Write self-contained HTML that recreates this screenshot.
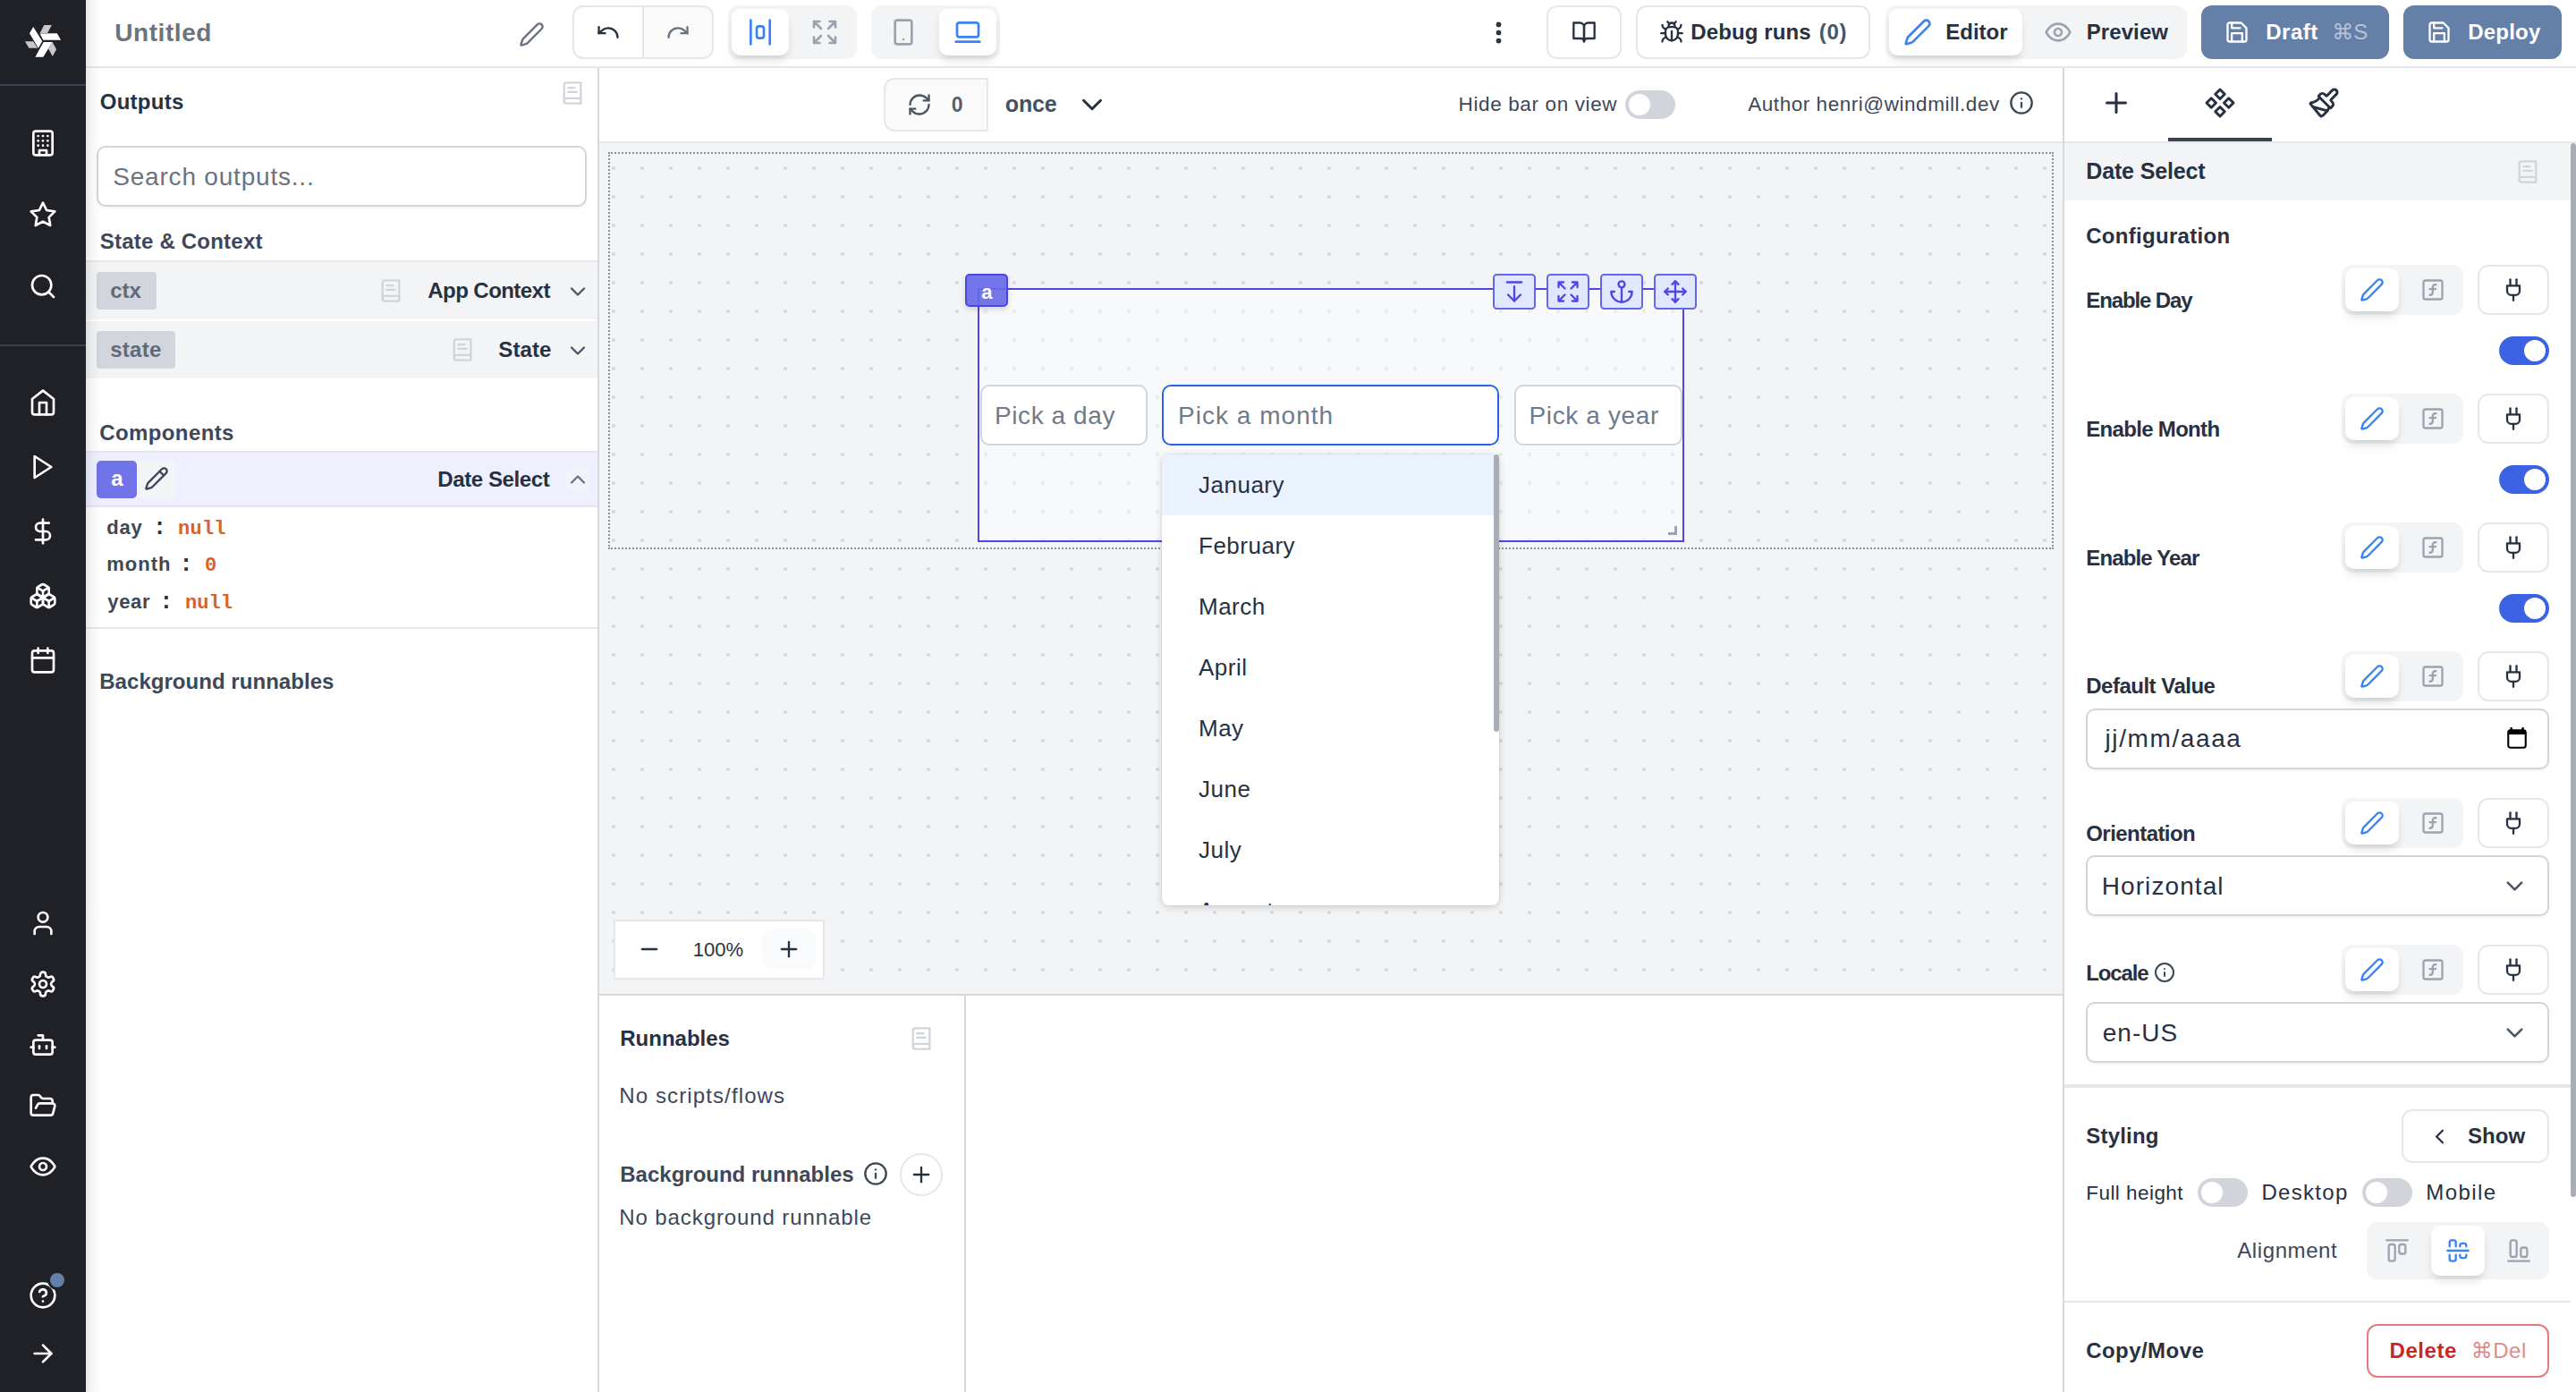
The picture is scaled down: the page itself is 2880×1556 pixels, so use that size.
<!DOCTYPE html><html><head><meta charset="utf-8"><title>Windmill App Editor</title><style>html,body{margin:0;padding:0;background:#fff}#r{position:relative;width:2880px;height:1556px;overflow:hidden}#r div,#r svg,#r span{position:absolute;display:block}.t{white-space:pre}</style></head><body><div id="r"><div style="left:0px;top:0px;width:2880px;height:1556px;background:#fff"></div>
<div style="left:670px;top:160px;width:1636px;height:952px;background-color:#f3f4f6;background-image:radial-gradient(circle,#d9d9d9 1.5px,rgba(217,217,217,0) 2.4px);background-size:32px 32px;background-position:0px 12px"></div>
<div style="left:680px;top:170px;width:1616px;height:444px;border:2px dotted #8e9095;box-sizing:border-box"></div>
<div style="left:96px;top:74px;width:2784px;height:2px;background:#e5e7eb"></div>
<span id="t0" class="t" style="left:128.25px;top:23.25px;font:bold 28px/28px 'Liberation Sans','DejaVu Sans',sans-serif;color:#6b7280;letter-spacing:0.571px;">Untitled</span>
<svg style="left:579.90px;top:23.50px" width="29" height="29" viewBox="0 0 24 24" fill="none" stroke="#6b7280" stroke-width="2" stroke-linecap="round" stroke-linejoin="round" ><path d="M21.174 6.812a1 1 0 0 0-3.986-3.987L3.842 16.174a2 2 0 0 0-.5.830l-1.321 4.352a.5.5 0 0 0 .623.622l4.353-1.320a2 2 0 0 0 .830-.497z"/></svg>
<div style="left:640px;top:6px;width:158px;height:60px;border:2px solid #e5e7eb;border-radius:12px;box-sizing:border-box;background:linear-gradient(90deg,#fff 0,#fff 78px,#fafafa 78px)"></div>
<div style="left:718px;top:8px;width:2px;height:56px;background:#e5e7eb"></div>
<svg style="left:666.00px;top:22.00px" width="28" height="28" viewBox="0 0 24 24" fill="none" stroke="#273141" stroke-width="2" stroke-linecap="round" stroke-linejoin="round" ><path d="M3 7v6h6"/><path d="M21 17a9 9 0 0 0-9-9 9 9 0 0 0-6 2.300L3 13"/></svg>
<svg style="left:743.50px;top:22.00px" width="28" height="28" viewBox="0 0 24 24" fill="none" stroke="#6b7280" stroke-width="2" stroke-linecap="round" stroke-linejoin="round" ><path d="M21 7v6h-6"/><path d="M3 17a9 9 0 0 1 9-9 9 9 0 0 1 6 2.300l3 2.700"/></svg>
<div style="left:814px;top:6px;width:144px;height:60px;background:#f3f4f6;border-radius:12px"></div>
<div style="left:818px;top:10px;width:64px;height:52px;background:#fff;border-radius:10px;box-shadow:0 8px 12px -2px rgba(0,0,0,.1),0 4px 8px -4px rgba(0,0,0,.1)"></div>
<svg style="left:834.00px;top:20.00px" width="32" height="32" viewBox="0 0 24 24" fill="none" stroke="#3b82f6" stroke-width="2" stroke-linecap="round" stroke-linejoin="round" ><rect width="6" height="10" x="9" y="7" rx="2"/><path d="M4 22V2"/><path d="M20 22V2"/></svg>
<svg style="left:906.00px;top:20.00px" width="32" height="32" viewBox="0 0 24 24" fill="none" stroke="#9ca3af" stroke-width="2" stroke-linecap="round" stroke-linejoin="round" ><path d="m21 21-6-6m6 6v-4.800m0 4.800h-4.800"/><path d="M3 16.200V21m0 0h4.800M3 21l6-6"/><path d="M21 7.800V3m0 0h-4.800M21 3l-6 6"/><path d="M3 7.800V3m0 0h4.800M3 3l6 6"/></svg>
<div style="left:974px;top:6px;width:144px;height:60px;background:#f3f4f6;border-radius:12px"></div>
<div style="left:1050px;top:10px;width:64px;height:52px;background:#fff;border-radius:10px;box-shadow:0 8px 12px -2px rgba(0,0,0,.1),0 4px 8px -4px rgba(0,0,0,.1)"></div>
<svg style="left:994.00px;top:20.00px" width="32" height="32" viewBox="0 0 24 24" fill="none" stroke="#9ca3af" stroke-width="2" stroke-linecap="round" stroke-linejoin="round" ><rect width="14" height="20" x="5" y="2" rx="2" ry="2"/><path d="M12 18h.01"/></svg>
<svg style="left:1066.00px;top:20.00px" width="32" height="32" viewBox="0 0 24 24" fill="none" stroke="#3b82f6" stroke-width="2" stroke-linecap="round" stroke-linejoin="round" ><rect width="18" height="12" x="3" y="4" rx="2" ry="2"/><line x1="2" x2="22" y1="20" y2="20"/></svg>
<svg style="left:1659.50px;top:20.50px" width="31" height="31" viewBox="0 0 24 24" fill="none" stroke="#273141" stroke-width="2.4" stroke-linecap="round" stroke-linejoin="round" ><circle cx="12" cy="12" r="1"/><circle cx="12" cy="5" r="1"/><circle cx="12" cy="19" r="1"/></svg>
<div style="left:1729px;top:6px;width:84px;height:60px;border:2px solid #e5e7eb;border-radius:12px;box-sizing:border-box"></div>
<svg style="left:1757.00px;top:22.00px" width="28" height="28" viewBox="0 0 24 24" fill="none" stroke="#273141" stroke-width="2" stroke-linecap="round" stroke-linejoin="round" ><path d="M2 3h6a4 4 0 0 1 4 4v14a3 3 0 0 0-3-3H2z"/><path d="M22 3h-6a4 4 0 0 0-4 4v14a3 3 0 0 1 3-3h7z"/></svg>
<div style="left:1829px;top:6px;width:262px;height:60px;border:2px solid #e5e7eb;border-radius:12px;box-sizing:border-box"></div>
<svg style="left:1855.00px;top:22.00px" width="28" height="28" viewBox="0 0 24 24" fill="none" stroke="#273141" stroke-width="2" stroke-linecap="round" stroke-linejoin="round" ><path d="m8 2 1.880 1.880"/><path d="M14.120 3.880 16 2"/><path d="M9 7.130v-1a3.003 3.003 0 1 1 6 0v1"/><path d="M12 20c-3.300 0-6-2.700-6-6v-3a4 4 0 0 1 4-4h4a4 4 0 0 1 4 4v3c0 3.300-2.700 6-6 6"/><path d="M12 20v-9"/><path d="M6.530 9C4.600 8.800 3 7.100 3 5"/><path d="M6 13H2"/><path d="M3 21c0-2.100 1.700-3.900 3.800-4"/><path d="M20.970 5c0 2.100-1.600 3.800-3.500 4"/><path d="M22 13h-4"/><path d="M17.200 17c2.100.100 3.800 1.900 3.800 4"/></svg>
<span id="t1" class="t" style="left:1890.25px;top:24.00px;font:bold 24px/24px 'Liberation Sans','DejaVu Sans',sans-serif;color:#273141;letter-spacing:0.111px;">Debug runs</span>
<span id="t2" class="t" style="left:2033.75px;top:24.00px;font:bold 24px/24px 'Liberation Sans','DejaVu Sans',sans-serif;color:#4b5563;letter-spacing:0.750px;">(0)</span>
<div style="left:2108px;top:6px;width:337px;height:60px;background:#f3f4f6;border-radius:12px"></div>
<div style="left:2112px;top:10px;width:149px;height:52px;background:#fff;border-radius:10px;box-shadow:0 8px 12px -2px rgba(0,0,0,.1),0 4px 8px -4px rgba(0,0,0,.1)"></div>
<svg style="left:2128.00px;top:20.00px" width="32" height="32" viewBox="0 0 24 24" fill="none" stroke="#3b82f6" stroke-width="2" stroke-linecap="round" stroke-linejoin="round" ><path d="M21.174 6.812a1 1 0 0 0-3.986-3.987L3.842 16.174a2 2 0 0 0-.5.830l-1.321 4.352a.5.5 0 0 0 .623.622l4.353-1.320a2 2 0 0 0 .830-.497z"/></svg>
<span id="t3" class="t" style="left:2175.25px;top:24.00px;font:bold 24px/24px 'Liberation Sans','DejaVu Sans',sans-serif;color:#273141;letter-spacing:0.000px;">Editor</span>
<svg style="left:2285.00px;top:20.00px" width="32" height="32" viewBox="0 0 24 24" fill="none" stroke="#9ca3af" stroke-width="2" stroke-linecap="round" stroke-linejoin="round" ><path d="M2 12s3-7 10-7 10 7 10 7-3 7-10 7-10-7-10-7Z"/><circle cx="12" cy="12" r="3"/></svg>
<span id="t4" class="t" style="left:2332.75px;top:24.00px;font:bold 24px/24px 'Liberation Sans','DejaVu Sans',sans-serif;color:#273141;letter-spacing:0.083px;">Preview</span>
<div style="left:2461px;top:6px;width:210px;height:60px;background:#6580a8;border-radius:12px"></div>
<svg style="left:2487.00px;top:22.00px" width="28" height="28" viewBox="0 0 24 24" fill="none" stroke="#fff" stroke-width="2" stroke-linecap="round" stroke-linejoin="round" ><path d="M19 21H5a2 2 0 0 1-2-2V5a2 2 0 0 1 2-2h11l5 5v11a2 2 0 0 1-2 2z"/><polyline points="17 21 17 13 7 13 7 21"/><polyline points="7 3 7 8 15 8"/></svg>
<span id="t5" class="t" style="left:2533.25px;top:24.00px;font:bold 24px/24px 'Liberation Sans','DejaVu Sans',sans-serif;color:#fff;letter-spacing:0.500px;">Draft</span>
<span id="t6" class="t" style="left:2607.25px;top:24.00px;font:normal 24px/24px 'Liberation Sans','DejaVu Sans',sans-serif;color:rgba(255,255,255,.55);letter-spacing:0.000px;">⌘S</span>
<div style="left:2687px;top:6px;width:177px;height:60px;background:#6580a8;border-radius:12px"></div>
<svg style="left:2713.00px;top:22.00px" width="28" height="28" viewBox="0 0 24 24" fill="none" stroke="#fff" stroke-width="2" stroke-linecap="round" stroke-linejoin="round" ><path d="M19 21H5a2 2 0 0 1-2-2V5a2 2 0 0 1 2-2h11l5 5v11a2 2 0 0 1-2 2z"/><polyline points="17 21 17 13 7 13 7 21"/><polyline points="7 3 7 8 15 8"/></svg>
<span id="t7" class="t" style="left:2759.25px;top:24.00px;font:bold 24px/24px 'Liberation Sans','DejaVu Sans',sans-serif;color:#fff;letter-spacing:0.200px;">Deploy</span>
<div style="left:0px;top:0px;width:96px;height:1556px;background:#202126"></div>
<svg style="left:0;top:0" width="96" height="96" viewBox="0 0 96 96"><polygon fill="#fff" points="44.5,37.6 63.8,37.2 68.1,44.7 48.3,44.7"/><polygon fill="#c8c8c8" points="49.3,27.9 57.9,27.9 53.1,36.9 44.5,37.2"/><polygon fill="#fff" points="37.2,30 47.2,45.9 42.9,53.7 33,37.2"/><polygon fill="#c8c8c8" points="27.9,46.2 37.2,46.2 42.1,53.8 32.4,53.8"/><polygon fill="#fff" points="48.6,46.9 58.6,46.9 48.3,63.8 39.4,63.8"/><polygon fill="#c8c8c8" points="58.5,46.9 63.1,55.2 58.8,62.9 54.1,54.5"/></svg>
<div style="left:0px;top:94px;width:96px;height:2px;background:#3b4252"></div>
<div style="left:0px;top:384.5px;width:96px;height:2px;background:#3b4252"></div>
<svg style="left:31.50px;top:144.00px" width="32" height="32" viewBox="0 0 24 24" fill="none" stroke="#fff" stroke-width="2" stroke-linecap="round" stroke-linejoin="round" ><rect width="16" height="20" x="4" y="2" rx="2" ry="2"/><path d="M9 22v-4h6v4"/><path d="M8 6h.01"/><path d="M16 6h.01"/><path d="M12 6h.01"/><path d="M12 10h.01"/><path d="M12 14h.01"/><path d="M16 10h.01"/><path d="M16 14h.01"/><path d="M8 10h.01"/><path d="M8 14h.01"/></svg>
<svg style="left:31.50px;top:224.00px" width="32" height="32" viewBox="0 0 24 24" fill="none" stroke="#fff" stroke-width="2" stroke-linecap="round" stroke-linejoin="round" ><polygon points="12 2 15.09 8.26 22 9.27 17 14.14 18.18 21.02 12 17.77 5.82 21.02 7 14.14 2 9.27 8.91 8.26 12 2"/></svg>
<svg style="left:31.50px;top:303.50px" width="32" height="32" viewBox="0 0 24 24" fill="none" stroke="#fff" stroke-width="2" stroke-linecap="round" stroke-linejoin="round" ><circle cx="11" cy="11" r="8"/><path d="m21 21-4.3-4.3"/></svg>
<svg style="left:31.50px;top:434.00px" width="32" height="32" viewBox="0 0 24 24" fill="none" stroke="#fff" stroke-width="2" stroke-linecap="round" stroke-linejoin="round" ><path d="m3 9 9-7 9 7v11a2 2 0 0 1-2 2H5a2 2 0 0 1-2-2z"/><polyline points="9 22 9 12 15 12 15 22"/></svg>
<svg style="left:31.50px;top:506.00px" width="32" height="32" viewBox="0 0 24 24" fill="none" stroke="#fff" stroke-width="2" stroke-linecap="round" stroke-linejoin="round" ><polygon points="5 3 19 12 5 21 5 3"/></svg>
<svg style="left:31.50px;top:578.00px" width="32" height="32" viewBox="0 0 24 24" fill="none" stroke="#fff" stroke-width="2" stroke-linecap="round" stroke-linejoin="round" ><line x1="12" x2="12" y1="2" y2="22"/><path d="M17 5H9.5a3.5 3.5 0 0 0 0 7h5a3.5 3.5 0 0 1 0 7H6"/></svg>
<svg style="left:31.50px;top:650.00px" width="32" height="32" viewBox="0 0 24 24" fill="none" stroke="#fff" stroke-width="2" stroke-linecap="round" stroke-linejoin="round" ><path d="M2.97 12.92A2 2 0 0 0 2 14.63v3.24a2 2 0 0 0 .97 1.71l3 1.8a2 2 0 0 0 2.06 0L12 19v-5.5l-5-3-4.03 2.42Z"/><path d="m7 16.5-4.74-2.85"/><path d="m7 16.5 5-3"/><path d="M7 16.5v5.17"/><path d="M12 13.5V19l3.970 2.380a2 2 0 0 0 2.060 0l3-1.800a2 2 0 0 0 .970-1.710v-3.240a2 2 0 0 0-.970-1.710L17 10.500l-5 3Z"/><path d="m17 16.5-5-3"/><path d="m17 16.5 4.740-2.850"/><path d="M17 16.5v5.170"/><path d="M7.970 4.420A2 2 0 0 0 7 6.130v4.370l5 3 5-3V6.130a2 2 0 0 0-.970-1.710l-3-1.800a2 2 0 0 0-2.060 0l-3 1.800Z"/><path d="M12 8 7.260 5.150"/><path d="m12 8 4.740-2.850"/><path d="M12 13.500V8"/></svg>
<svg style="left:31.50px;top:722.00px" width="32" height="32" viewBox="0 0 24 24" fill="none" stroke="#fff" stroke-width="2" stroke-linecap="round" stroke-linejoin="round" ><rect width="18" height="18" x="3" y="4" rx="2" ry="2"/><line x1="16" x2="16" y1="2" y2="6"/><line x1="8" x2="8" y1="2" y2="6"/><line x1="3" x2="21" y1="10" y2="10"/></svg>
<svg style="left:31.50px;top:1016.00px" width="32" height="32" viewBox="0 0 24 24" fill="none" stroke="#fff" stroke-width="2" stroke-linecap="round" stroke-linejoin="round" ><path d="M19 21v-2a4 4 0 0 0-4-4H9a4 4 0 0 0-4 4v2"/><circle cx="12" cy="7" r="4"/></svg>
<svg style="left:31.50px;top:1084.00px" width="32" height="32" viewBox="0 0 24 24" fill="none" stroke="#fff" stroke-width="2" stroke-linecap="round" stroke-linejoin="round" ><path d="M12.22 2h-.44a2 2 0 0 0-2 2v.18a2 2 0 0 1-1 1.73l-.43.25a2 2 0 0 1-2 0l-.15-.08a2 2 0 0 0-2.730.730l-.220.380a2 2 0 0 0 .730 2.730l.150.100a2 2 0 0 1 1 1.720v.510a2 2 0 0 1-1 1.740l-.150.090a2 2 0 0 0-.730 2.730l.220.380a2 2 0 0 0 2.730.730l.150-.080a2 2 0 0 1 2 0l.430.250a2 2 0 0 1 1 1.730V20a2 2 0 0 0 2 2h.440a2 2 0 0 0 2-2v-.180a2 2 0 0 1 1-1.730l.430-.250a2 2 0 0 1 2 0l.150.080a2 2 0 0 0 2.730-.730l.220-.390a2 2 0 0 0-.730-2.730l-.150-.080a2 2 0 0 1-1-1.740v-.500a2 2 0 0 1 1-1.740l.150-.090a2 2 0 0 0 .730-2.730l-.220-.380a2 2 0 0 0-2.730-.730l-.150.080a2 2 0 0 1-2 0l-.430-.250a2 2 0 0 1-1-1.730V4a2 2 0 0 0-2-2z"/><circle cx="12" cy="12" r="3"/></svg>
<svg style="left:31.50px;top:1151.50px" width="32" height="32" viewBox="0 0 24 24" fill="none" stroke="#fff" stroke-width="2" stroke-linecap="round" stroke-linejoin="round" ><path d="M12 8V4H8"/><rect width="16" height="12" x="4" y="8" rx="2"/><path d="M2 14h2"/><path d="M20 14h2"/><path d="M15 13v2"/><path d="M9 13v2"/></svg>
<svg style="left:31.50px;top:1219.50px" width="32" height="32" viewBox="0 0 24 24" fill="none" stroke="#fff" stroke-width="2" stroke-linecap="round" stroke-linejoin="round" ><path d="m6 14 1.500-2.900A2 2 0 0 1 9.240 10H20a2 2 0 0 1 1.940 2.500l-1.540 6a2 2 0 0 1-1.950 1.500H4a2 2 0 0 1-2-2V5a2 2 0 0 1 2-2h3.900a2 2 0 0 1 1.690.900l.810 1.200a2 2 0 0 0 1.670.900H18a2 2 0 0 1 2 2v2"/></svg>
<svg style="left:31.50px;top:1288.00px" width="32" height="32" viewBox="0 0 24 24" fill="none" stroke="#fff" stroke-width="2" stroke-linecap="round" stroke-linejoin="round" ><path d="M2 12s3-7 10-7 10 7 10 7-3 7-10 7-10-7-10-7Z"/><circle cx="12" cy="12" r="3"/></svg>
<svg style="left:31.50px;top:1432.00px" width="32" height="32" viewBox="0 0 24 24" fill="none" stroke="#fff" stroke-width="2" stroke-linecap="round" stroke-linejoin="round" ><circle cx="12" cy="12" r="10"/><path d="M9.090 9a3 3 0 0 1 5.830 1c0 2-3 3-3 3"/><path d="M12 17h.01"/></svg>
<svg style="left:31.50px;top:1496.50px" width="32" height="32" viewBox="0 0 24 24" fill="none" stroke="#fff" stroke-width="2" stroke-linecap="round" stroke-linejoin="round" ><path d="M5 12h14"/><path d="m12 5 7 7-7 7"/></svg>
<div style="left:56px;top:1423px;width:16px;height:16px;background:#6580a8;border-radius:8px;box-shadow:0 0 0 3px #202126"></div>
<div style="left:668px;top:76px;width:2px;height:1480px;background:#d8d9dc"></div>
<span id="t8" class="t" style="left:111.75px;top:102.00px;font:bold 24px/24px 'Liberation Sans','DejaVu Sans',sans-serif;color:#273141;letter-spacing:0.250px;">Outputs</span>
<svg style="left:626.00px;top:90.00px" width="28" height="28" viewBox="0 0 24 24" fill="none" stroke="#d1d5db" stroke-width="2" stroke-linecap="round" stroke-linejoin="round" ><path d="M4 19.500v-15A2.500 2.500 0 0 1 6.500 2H20v20H6.500a2.500 2.500 0 0 1 0-5H20"/><path d="M8 7h6"/><path d="M8 11h8"/></svg>
<div style="left:108px;top:163px;width:548px;height:68px;border:2px solid #d1d5db;border-radius:10px;box-sizing:border-box;box-shadow:0 2px 3px rgba(0,0,0,.05)"></div>
<span id="t9" class="t" style="left:126.25px;top:184.00px;font:normal 28px/28px 'Liberation Sans','DejaVu Sans',sans-serif;color:#6b7280;letter-spacing:0.797px;">Search outputs...</span>
<span id="t10" class="t" style="left:111.75px;top:258.00px;font:bold 24px/24px 'Liberation Sans','DejaVu Sans',sans-serif;color:#3d4757;letter-spacing:0.214px;">State &amp; Context</span>
<div style="left:96px;top:291px;width:572px;height:2px;background:#e5e7eb"></div>
<div style="left:96px;top:293px;width:572px;height:64px;background:#f3f4f6"></div>
<div style="left:96px;top:359px;width:572px;height:64px;background:#f3f4f6"></div>
<div style="left:108px;top:304px;width:67px;height:42px;background:#d2d5db;border-radius:4px"></div>
<span id="t11" class="t" style="left:123.25px;top:313.00px;font:bold 24px/24px 'Liberation Sans','DejaVu Sans',sans-serif;color:#5f6a7c;letter-spacing:0.000px;">ctx</span>
<svg style="left:423.00px;top:311.00px" width="28" height="28" viewBox="0 0 24 24" fill="none" stroke="#d1d5db" stroke-width="2" stroke-linecap="round" stroke-linejoin="round" ><path d="M4 19.500v-15A2.500 2.500 0 0 1 6.500 2H20v20H6.500a2.500 2.500 0 0 1 0-5H20"/><path d="M8 7h6"/><path d="M8 11h8"/></svg>
<span id="t12" class="t" style="left:478.25px;top:313.00px;font:bold 24px/24px 'Liberation Sans','DejaVu Sans',sans-serif;color:#273141;letter-spacing:-0.550px;">App Context</span>
<svg style="left:632.00px;top:311.50px" width="28" height="28" viewBox="0 0 24 24" fill="none" stroke="#4b5563" stroke-width="2" stroke-linecap="round" stroke-linejoin="round" ><path d="m6 9 6 6 6-6"/></svg>
<div style="left:108px;top:370px;width:88px;height:42px;background:#d2d5db;border-radius:4px"></div>
<span id="t13" class="t" style="left:123.25px;top:379.00px;font:bold 24px/24px 'Liberation Sans','DejaVu Sans',sans-serif;color:#5f6a7c;letter-spacing:0.250px;">state</span>
<svg style="left:503.00px;top:376.50px" width="28" height="28" viewBox="0 0 24 24" fill="none" stroke="#d1d5db" stroke-width="2" stroke-linecap="round" stroke-linejoin="round" ><path d="M4 19.500v-15A2.500 2.500 0 0 1 6.500 2H20v20H6.500a2.500 2.500 0 0 1 0-5H20"/><path d="M8 7h6"/><path d="M8 11h8"/></svg>
<span id="t14" class="t" style="left:557.25px;top:379.00px;font:bold 24px/24px 'Liberation Sans','DejaVu Sans',sans-serif;color:#273141;letter-spacing:0.125px;">State</span>
<svg style="left:632.00px;top:377.50px" width="28" height="28" viewBox="0 0 24 24" fill="none" stroke="#4b5563" stroke-width="2" stroke-linecap="round" stroke-linejoin="round" ><path d="m6 9 6 6 6-6"/></svg>
<span id="t15" class="t" style="left:111.25px;top:472.00px;font:bold 24px/24px 'Liberation Sans','DejaVu Sans',sans-serif;color:#3d4757;letter-spacing:0.389px;">Components</span>
<div style="left:96px;top:504px;width:572px;height:63px;background:#eef0ff;border-top:2px solid #e5e7eb;border-bottom:2px solid #e5e7eb;box-sizing:border-box"></div>
<div style="left:108px;top:515px;width:45px;height:42px;background:#7173e8;border-radius:5px"></div>
<span id="t16" class="t" style="left:124.25px;top:523.00px;font:bold 24px/24px 'Liberation Sans','DejaVu Sans',sans-serif;color:#fff;letter-spacing:0.000px;">a</span>
<div style="left:153px;top:515px;width:43px;height:42px;background:#f3f4f6;border-radius:0 4px 4px 0"></div>
<svg style="left:161.00px;top:521.00px" width="28" height="28" viewBox="0 0 24 24" fill="none" stroke="#3d4757" stroke-width="2" stroke-linecap="round" stroke-linejoin="round" ><path d="M21.174 6.812a1 1 0 0 0-3.986-3.987L3.842 16.174a2 2 0 0 0-.5.830l-1.321 4.352a.5.5 0 0 0 .623.622l4.353-1.320a2 2 0 0 0 .830-.497z"/><path d="m15 5 4 4"/></svg>
<span id="t17" class="t" style="left:489.25px;top:524.00px;font:bold 24px/24px 'Liberation Sans','DejaVu Sans',sans-serif;color:#273141;letter-spacing:-0.400px;">Date Select</span>
<div style="left:632px;top:522px;width:28px;height:28px;background:#f1f3fb;border-radius:4px"></div>
<svg style="left:632.00px;top:522.00px" width="28" height="28" viewBox="0 0 24 24" fill="none" stroke="#6b7280" stroke-width="2" stroke-linecap="round" stroke-linejoin="round" ><path d="m18 15-6-6-6 6"/></svg>
<span id="t18" class="t" style="left:119.25px;top:578.75px;font:bold 22px/22px 'Liberation Sans','DejaVu Sans',sans-serif;color:#3d4757;letter-spacing:0.750px;">day</span>
<span id="t19" class="t" style="left:170.75px;top:576.75px;font:bold 26px/26px 'Liberation Mono','DejaVu Sans Mono',monospace;color:#273141;letter-spacing:0.000px;">:</span>
<span id="t20" class="t" style="left:199.00px;top:580.75px;font:bold 22px/22px 'Liberation Mono','DejaVu Sans Mono',monospace;color:#d8622b;letter-spacing:0.250px;">null</span>
<span id="t21" class="t" style="left:119.25px;top:620.35px;font:bold 22px/22px 'Liberation Sans','DejaVu Sans',sans-serif;color:#3d4757;letter-spacing:1.000px;">month</span>
<span id="t22" class="t" style="left:200.25px;top:618.35px;font:bold 26px/26px 'Liberation Mono','DejaVu Sans Mono',monospace;color:#273141;letter-spacing:0.000px;">:</span>
<span id="t23" class="t" style="left:229.00px;top:622.35px;font:bold 22px/22px 'Liberation Mono','DejaVu Sans Mono',monospace;color:#d8622b;letter-spacing:0.000px;">0</span>
<span id="t24" class="t" style="left:120.25px;top:661.95px;font:bold 22px/22px 'Liberation Sans','DejaVu Sans',sans-serif;color:#3d4757;letter-spacing:0.667px;">year</span>
<span id="t25" class="t" style="left:178.00px;top:659.95px;font:bold 26px/26px 'Liberation Mono','DejaVu Sans Mono',monospace;color:#273141;letter-spacing:0.000px;">:</span>
<span id="t26" class="t" style="left:207.00px;top:663.95px;font:bold 22px/22px 'Liberation Mono','DejaVu Sans Mono',monospace;color:#d8622b;letter-spacing:0.083px;">null</span>
<div style="left:96px;top:701px;width:572px;height:2px;background:#e5e7eb"></div>
<span id="t27" class="t" style="left:111.25px;top:750.00px;font:bold 24px/24px 'Liberation Sans','DejaVu Sans',sans-serif;color:#3d4757;letter-spacing:0.039px;">Background runnables</span>
<div style="left:670px;top:76px;width:1636px;height:82px;background:#fff"></div>
<div style="left:670px;top:158px;width:2210px;height:2px;background:#e5e7eb"></div>
<div style="left:988px;top:87px;width:117px;height:60px;background:#fafafa;border:2px solid #e5e7eb;border-radius:12px 0 0 12px;box-sizing:border-box"></div>
<svg style="left:1014.00px;top:103.00px" width="28" height="28" viewBox="0 0 24 24" fill="none" stroke="#4b5563" stroke-width="2" stroke-linecap="round" stroke-linejoin="round" ><path d="M3 12a9 9 0 0 1 9-9 9.750 9.750 0 0 1 6.740 2.740L21 8"/><path d="M21 3v5h-5"/><path d="M21 12a9 9 0 0 1-9 9 9.750 9.750 0 0 1-6.740-2.740L3 16"/><path d="M8 16H3v5"/></svg>
<span id="t28" class="t" style="left:1063.75px;top:106.00px;font:bold 23px/23px 'Liberation Sans','DejaVu Sans',sans-serif;color:#566071;letter-spacing:0.000px;">0</span>
<span id="t29" class="t" style="left:1123.85px;top:104.00px;font:bold 25px/25px 'Liberation Sans','DejaVu Sans',sans-serif;color:#465061;letter-spacing:-0.200px;">once</span>
<svg style="left:1202.00px;top:97.50px" width="38" height="38" viewBox="0 0 24 24" fill="none" stroke="#283040" stroke-width="1.9" stroke-linecap="round" stroke-linejoin="round" ><path d="m6 9 6 6 6-6"/></svg>
<span id="t30" class="t" style="left:1630.55px;top:106.25px;font:normal 22.5px/22.5px 'Liberation Sans','DejaVu Sans',sans-serif;color:#3d4757;letter-spacing:0.627px;">Hide bar on view</span>
<div style="left:1817px;top:101px;width:56px;height:32px;background:#d1d5db;border-radius:16px"></div>
<div style="left:1821px;top:105px;width:24px;height:24px;background:#fff;border-radius:12px"></div>
<span id="t31" class="t" style="left:1954.25px;top:106.25px;font:normal 22.5px/22.5px 'Liberation Sans','DejaVu Sans',sans-serif;color:#3d4757;letter-spacing:0.542px;">Author henri@windmill.dev</span>
<svg style="left:2246.00px;top:101.00px" width="28" height="28" viewBox="0 0 24 24" fill="none" stroke="#3d4757" stroke-width="2" stroke-linecap="round" stroke-linejoin="round" ><circle cx="12" cy="12" r="10"/><path d="M12 16v-4"/><path d="M12 8h.01"/></svg>
<div style="left:1093px;top:322px;width:790px;height:284px;border:2px solid #4f46e5;box-sizing:border-box;background:rgba(255,255,255,.42)"></div>
<div style="left:1079px;top:306px;width:48px;height:37px;background:rgba(104,106,232,.92);border:2px solid #4d47dc;border-radius:5px;box-sizing:border-box;box-shadow:0 3px 6px rgba(0,0,0,.14)"></div>
<span id="t32" class="t" style="left:1097.25px;top:316.00px;font:bold 22px/22px 'Liberation Sans','DejaVu Sans',sans-serif;color:#fff;letter-spacing:0.000px;">a</span>
<div style="left:1668.75px;top:306px;width:48.25px;height:39.5px;background:#e0e7ff;border:2px solid #6366f1;border-radius:4.5px;box-sizing:border-box"></div>
<svg style="left:1679.25px;top:312.00px" width="28" height="28" viewBox="0 0 24 24" fill="none" stroke="#4f46e5" stroke-width="2" stroke-linecap="round" stroke-linejoin="round" ><path d="M19 3H5"/><path d="M12 21V7"/><path d="m6 15 6 6 6-6"/></svg>
<div style="left:1728.75px;top:306px;width:48.25px;height:39.5px;background:#e0e7ff;border:2px solid #6366f1;border-radius:4.5px;box-sizing:border-box"></div>
<svg style="left:1739.25px;top:312.00px" width="28" height="28" viewBox="0 0 24 24" fill="none" stroke="#4f46e5" stroke-width="2" stroke-linecap="round" stroke-linejoin="round" ><path d="m21 21-6-6m6 6v-4.800m0 4.800h-4.800"/><path d="M3 16.200V21m0 0h4.800M3 21l6-6"/><path d="M21 7.800V3m0 0h-4.800M21 3l-6 6"/><path d="M3 7.800V3m0 0h4.800M3 3l6 6"/></svg>
<div style="left:1788.75px;top:306px;width:48.25px;height:39.5px;background:#e0e7ff;border:2px solid #6366f1;border-radius:4.5px;box-sizing:border-box"></div>
<svg style="left:1799.25px;top:312.00px" width="28" height="28" viewBox="0 0 24 24" fill="none" stroke="#4f46e5" stroke-width="2" stroke-linecap="round" stroke-linejoin="round" ><circle cx="12" cy="5" r="3"/><line x1="12" x2="12" y1="22" y2="8"/><path d="M5 12H2a10 10 0 0 0 20 0h-3"/></svg>
<div style="left:1848.75px;top:306px;width:48.25px;height:39.5px;background:#e0e7ff;border:2px solid #6366f1;border-radius:4.5px;box-sizing:border-box"></div>
<svg style="left:1859.25px;top:312.00px" width="28" height="28" viewBox="0 0 24 24" fill="none" stroke="#4f46e5" stroke-width="2" stroke-linecap="round" stroke-linejoin="round" ><polyline points="5 9 2 12 5 15"/><polyline points="9 5 12 2 15 5"/><polyline points="15 19 12 22 9 19"/><polyline points="19 9 22 12 19 15"/><line x1="2" x2="22" y1="12" y2="12"/><line x1="12" x2="12" y1="2" y2="22"/></svg>
<div style="left:1096px;top:430px;width:187px;height:68px;background:#fff;border:2px solid #d1d5db;border-radius:10px;box-sizing:border-box"></div>
<span id="t33" class="t" style="left:1112.00px;top:451.25px;font:normal 28px/28px 'Liberation Sans','DejaVu Sans',sans-serif;color:#6f7b89;letter-spacing:0.583px;">Pick a day</span>
<div style="left:1299px;top:430px;width:377px;height:68px;background:#fff;border:2px solid #2563eb;border-radius:10px;box-sizing:border-box"></div>
<span id="t34" class="t" style="left:1317.00px;top:451.25px;font:normal 28px/28px 'Liberation Sans','DejaVu Sans',sans-serif;color:#6f7b89;letter-spacing:1.023px;">Pick a month</span>
<div style="left:1693px;top:430px;width:188px;height:68px;background:#fff;border:2px solid #d1d5db;border-radius:10px;box-sizing:border-box"></div>
<span id="t35" class="t" style="left:1709.50px;top:451.25px;font:normal 28px/28px 'Liberation Sans','DejaVu Sans',sans-serif;color:#6f7b89;letter-spacing:0.625px;">Pick a year</span>
<svg style="left:1863px;top:586px" width="14" height="14" viewBox="0 0 14 14"><path d="M2 10.500H10.500V2" fill="none" stroke="#9ca3af" stroke-width="3"/></svg>
<div style="left:1299px;top:508px;width:377px;height:504px;background:#fff;border-radius:8px;box-shadow:0 2px 8px rgba(0,0,0,.16),0 0 2px rgba(0,0,0,.12);overflow:hidden"><div style="left:0;top:0;width:377px;height:68px;background:#ebf2ff"></div></div>
<div style="left:1670px;top:508px;width:6px;height:310px;background:#a9adb6;border-radius:3px"></div>
<div style="left:1299px;top:508px;width:371px;height:504px;overflow:hidden">
<span class="t" id="tjan" style="left:41px;top:20.75px;font:normal 26px/26px 'Liberation Sans','DejaVu Sans',sans-serif;color:#273141;letter-spacing:0.500px">January</span>
<span class="t"  style="left:41px;top:88.75px;font:normal 26px/26px 'Liberation Sans','DejaVu Sans',sans-serif;color:#273141;letter-spacing:0.500px">February</span>
<span class="t"  style="left:41px;top:156.75px;font:normal 26px/26px 'Liberation Sans','DejaVu Sans',sans-serif;color:#273141;letter-spacing:0.500px">March</span>
<span class="t"  style="left:41px;top:224.75px;font:normal 26px/26px 'Liberation Sans','DejaVu Sans',sans-serif;color:#273141;letter-spacing:0.500px">April</span>
<span class="t"  style="left:41px;top:292.75px;font:normal 26px/26px 'Liberation Sans','DejaVu Sans',sans-serif;color:#273141;letter-spacing:0.500px">May</span>
<span class="t"  style="left:41px;top:360.75px;font:normal 26px/26px 'Liberation Sans','DejaVu Sans',sans-serif;color:#273141;letter-spacing:0.500px">June</span>
<span class="t"  style="left:41px;top:428.75px;font:normal 26px/26px 'Liberation Sans','DejaVu Sans',sans-serif;color:#273141;letter-spacing:0.500px">July</span>
<span class="t"  style="left:41px;top:496.75px;font:normal 26px/26px 'Liberation Sans','DejaVu Sans',sans-serif;color:#273141;letter-spacing:0.500px">August</span>
</div>
<div style="left:686px;top:1027.5px;width:236px;height:67px;background:#fff;border:2px solid #e5e7eb;box-sizing:border-box"></div>
<svg style="left:712.00px;top:1046.75px" width="28" height="28" viewBox="0 0 24 24" fill="none" stroke="#273141" stroke-width="2" stroke-linecap="round" stroke-linejoin="round" ><path d="M5 12h14"/></svg>
<span id="t36" class="t" style="left:774.75px;top:1050.75px;font:normal 22px/22px 'Liberation Sans','DejaVu Sans',sans-serif;color:#273141;letter-spacing:0.000px;">100%</span>
<div style="left:852px;top:1039px;width:60px;height:43.5px;background:#f9fafb;border-radius:10px"></div>
<svg style="left:868.00px;top:1046.75px" width="28" height="28" viewBox="0 0 24 24" fill="none" stroke="#273141" stroke-width="2" stroke-linecap="round" stroke-linejoin="round" ><path d="M5 12h14"/><path d="M12 5v14"/></svg>
<div style="left:670px;top:1111px;width:1636px;height:2px;background:#d8d9dc"></div>
<div style="left:670px;top:1113px;width:1636px;height:443px;background:#fff"></div>
<div style="left:1078px;top:1113px;width:2px;height:443px;background:#d8d9dc"></div>
<span id="t37" class="t" style="left:693.25px;top:1149.00px;font:bold 24px/24px 'Liberation Sans','DejaVu Sans',sans-serif;color:#273141;letter-spacing:0.000px;">Runnables</span>
<svg style="left:1016.00px;top:1147.00px" width="28" height="28" viewBox="0 0 24 24" fill="none" stroke="#d1d5db" stroke-width="2" stroke-linecap="round" stroke-linejoin="round" ><path d="M4 19.500v-15A2.500 2.500 0 0 1 6.500 2H20v20H6.500a2.500 2.500 0 0 1 0-5H20"/><path d="M8 7h6"/><path d="M8 11h8"/></svg>
<span id="t38" class="t" style="left:692.25px;top:1213.00px;font:normal 24px/24px 'Liberation Sans','DejaVu Sans',sans-serif;color:#3d4757;letter-spacing:1.117px;">No scripts/flows</span>
<span id="t39" class="t" style="left:693.25px;top:1300.50px;font:bold 24px/24px 'Liberation Sans','DejaVu Sans',sans-serif;color:#3d4757;letter-spacing:0.000px;">Background runnables</span>
<svg style="left:965.00px;top:1297.50px" width="28" height="28" viewBox="0 0 24 24" fill="none" stroke="#3d4757" stroke-width="2" stroke-linecap="round" stroke-linejoin="round" ><circle cx="12" cy="12" r="10"/><path d="M12 16v-4"/><path d="M12 8h.01"/></svg>
<div style="left:1006px;top:1289px;width:47.5px;height:47.5px;border:2px solid #e5e7eb;border-radius:50%;box-sizing:border-box"></div>
<svg style="left:1016.00px;top:1298.50px" width="28" height="28" viewBox="0 0 24 24" fill="none" stroke="#273141" stroke-width="2" stroke-linecap="round" stroke-linejoin="round" ><path d="M5 12h14"/><path d="M12 5v14"/></svg>
<span id="t40" class="t" style="left:692.25px;top:1349.40px;font:normal 24px/24px 'Liberation Sans','DejaVu Sans',sans-serif;color:#3d4757;letter-spacing:0.905px;">No background runnable</span>
<div style="left:2306px;top:76px;width:2px;height:1480px;background:#d8d9dc"></div>
<div style="left:2308px;top:76px;width:572px;height:82px;background:#fff"></div>
<svg style="left:2348.00px;top:97.00px" width="36" height="36" viewBox="0 0 24 24" fill="none" stroke="#273141" stroke-width="2" stroke-linecap="round" stroke-linejoin="round" ><path d="M5 12h14"/><path d="M12 5v14"/></svg>
<svg style="left:2464.00px;top:97.00px" width="36" height="36" viewBox="0 0 24 24" fill="none" stroke="#273141" stroke-width="2" stroke-linecap="round" stroke-linejoin="round" ><path d="M5.500 8.500 9 12l-3.500 3.500L2 12l3.500-3.500Z"/><path d="m12 2 3.500 3.500L12 9 8.500 5.500 12 2Z"/><path d="M18.500 8.500 22 12l-3.500 3.500L15 12l3.500-3.500Z"/><path d="m12 15 3.500 3.500L12 22l-3.500-3.500L12 15Z"/></svg>
<svg style="left:2580.00px;top:97.00px" width="36" height="36" viewBox="0 0 24 24" fill="none" stroke="#273141" stroke-width="2" stroke-linecap="round" stroke-linejoin="round" ><path d="m14.622 17.897-10.680-2.913"/><path d="M18.376 2.622a1 1 0 1 1 3.002 3.002L17.360 9.643a.5.5 0 0 0 0 .707l.944.944a2.410 2.410 0 0 1 0 3.408l-.944.944a.5.5 0 0 1-.707 0L8.354 7.348a.5.5 0 0 1 0-.707l.944-.944a2.410 2.410 0 0 1 3.408 0l.944.944a.5.5 0 0 0 .707 0z"/><path d="M9 8c-1.804 2.710-3.970 3.460-6.583 3.948a.507.507 0 0 0-.302.819l7.320 8.883a1 1 0 0 0 1.185.204C12.735 20.405 16 16.792 16 15"/></svg>
<div style="left:2424px;top:154px;width:116px;height:4px;background:#374151"></div>
<div style="left:2308px;top:160px;width:572px;height:1396px;background:#fff"></div>
<div style="left:2308px;top:160px;width:566px;height:64px;background:#f3f4f6"></div>
<span id="t41" class="t" style="left:2332.25px;top:179.00px;font:bold 25px/25px 'Liberation Sans','DejaVu Sans',sans-serif;color:#273141;letter-spacing:-0.150px;">Date Select</span>
<svg style="left:2812.00px;top:178.00px" width="28" height="28" viewBox="0 0 24 24" fill="none" stroke="#d1d5db" stroke-width="2" stroke-linecap="round" stroke-linejoin="round" ><path d="M4 19.500v-15A2.500 2.500 0 0 1 6.500 2H20v20H6.500a2.500 2.500 0 0 1 0-5H20"/><path d="M8 7h6"/><path d="M8 11h8"/></svg>
<div style="left:2874px;top:160px;width:6px;height:1178px;background:#a9adb6;border-radius:3px"></div>
<span id="t42" class="t" style="left:2332.25px;top:252.00px;font:bold 24px/24px 'Liberation Sans','DejaVu Sans',sans-serif;color:#273141;letter-spacing:0.292px;">Configuration</span>
<div style="left:2618px;top:296px;width:136px;height:56px;background:#f3f4f6;border-radius:12px"></div>
<div style="left:2622px;top:300px;width:60px;height:48px;background:#fff;border-radius:10px;box-shadow:0 8px 12px -2px rgba(0,0,0,.1),0 4px 8px -4px rgba(0,0,0,.1)"></div>
<svg style="left:2638.00px;top:310.00px" width="28" height="28" viewBox="0 0 24 24" fill="none" stroke="#3b82f6" stroke-width="2" stroke-linecap="round" stroke-linejoin="round" ><path d="M21.174 6.812a1 1 0 0 0-3.986-3.987L3.842 16.174a2 2 0 0 0-.5.830l-1.321 4.352a.5.5 0 0 0 .623.622l4.353-1.320a2 2 0 0 0 .830-.497z"/></svg>
<svg style="left:2706.00px;top:310.00px" width="28" height="28" viewBox="0 0 24 24" fill="none" stroke="#9ca3af" stroke-width="2" stroke-linecap="round" stroke-linejoin="round" ><rect width="18" height="18" x="3" y="3" rx="2" ry="2"/><path d="M9 17c2 0 2.800-1 2.800-2.800V10c0-2 1-3.300 3.200-3"/><path d="M9 11.200h5.700"/></svg>
<div style="left:2770px;top:296px;width:80px;height:56px;border:2px solid #e5e7eb;border-radius:12px;box-sizing:border-box"></div>
<svg style="left:2796.00px;top:310.00px" width="28" height="28" viewBox="0 0 24 24" fill="none" stroke="#273141" stroke-width="2" stroke-linecap="round" stroke-linejoin="round" ><path d="M12 22v-5"/><path d="M9 8V2"/><path d="M15 8V2"/><path d="M18 8v5a4 4 0 0 1-4 4h-4a4 4 0 0 1-4-4V8Z"/></svg>
<span id="t43" class="t" style="left:2332.25px;top:323.75px;font:bold 24px/24px 'Liberation Sans','DejaVu Sans',sans-serif;color:#273141;letter-spacing:-1.111px;">Enable Day</span>
<div style="left:2794px;top:376px;width:56px;height:32px;background:#3b62e2;border-radius:16px"></div>
<div style="left:2822px;top:380px;width:24px;height:24px;background:#fff;border-radius:12px"></div>
<div style="left:2618px;top:440px;width:136px;height:56px;background:#f3f4f6;border-radius:12px"></div>
<div style="left:2622px;top:444px;width:60px;height:48px;background:#fff;border-radius:10px;box-shadow:0 8px 12px -2px rgba(0,0,0,.1),0 4px 8px -4px rgba(0,0,0,.1)"></div>
<svg style="left:2638.00px;top:454.00px" width="28" height="28" viewBox="0 0 24 24" fill="none" stroke="#3b82f6" stroke-width="2" stroke-linecap="round" stroke-linejoin="round" ><path d="M21.174 6.812a1 1 0 0 0-3.986-3.987L3.842 16.174a2 2 0 0 0-.5.830l-1.321 4.352a.5.5 0 0 0 .623.622l4.353-1.320a2 2 0 0 0 .830-.497z"/></svg>
<svg style="left:2706.00px;top:454.00px" width="28" height="28" viewBox="0 0 24 24" fill="none" stroke="#9ca3af" stroke-width="2" stroke-linecap="round" stroke-linejoin="round" ><rect width="18" height="18" x="3" y="3" rx="2" ry="2"/><path d="M9 17c2 0 2.800-1 2.800-2.800V10c0-2 1-3.300 3.200-3"/><path d="M9 11.200h5.700"/></svg>
<div style="left:2770px;top:440px;width:80px;height:56px;border:2px solid #e5e7eb;border-radius:12px;box-sizing:border-box"></div>
<svg style="left:2796.00px;top:454.00px" width="28" height="28" viewBox="0 0 24 24" fill="none" stroke="#273141" stroke-width="2" stroke-linecap="round" stroke-linejoin="round" ><path d="M12 22v-5"/><path d="M9 8V2"/><path d="M15 8V2"/><path d="M18 8v5a4 4 0 0 1-4 4h-4a4 4 0 0 1-4-4V8Z"/></svg>
<span id="t44" class="t" style="left:2332.25px;top:467.75px;font:bold 24px/24px 'Liberation Sans','DejaVu Sans',sans-serif;color:#273141;letter-spacing:-0.682px;">Enable Month</span>
<div style="left:2794px;top:520px;width:56px;height:32px;background:#3b62e2;border-radius:16px"></div>
<div style="left:2822px;top:524px;width:24px;height:24px;background:#fff;border-radius:12px"></div>
<div style="left:2618px;top:584px;width:136px;height:56px;background:#f3f4f6;border-radius:12px"></div>
<div style="left:2622px;top:588px;width:60px;height:48px;background:#fff;border-radius:10px;box-shadow:0 8px 12px -2px rgba(0,0,0,.1),0 4px 8px -4px rgba(0,0,0,.1)"></div>
<svg style="left:2638.00px;top:598.00px" width="28" height="28" viewBox="0 0 24 24" fill="none" stroke="#3b82f6" stroke-width="2" stroke-linecap="round" stroke-linejoin="round" ><path d="M21.174 6.812a1 1 0 0 0-3.986-3.987L3.842 16.174a2 2 0 0 0-.5.830l-1.321 4.352a.5.5 0 0 0 .623.622l4.353-1.320a2 2 0 0 0 .830-.497z"/></svg>
<svg style="left:2706.00px;top:598.00px" width="28" height="28" viewBox="0 0 24 24" fill="none" stroke="#9ca3af" stroke-width="2" stroke-linecap="round" stroke-linejoin="round" ><rect width="18" height="18" x="3" y="3" rx="2" ry="2"/><path d="M9 17c2 0 2.800-1 2.800-2.800V10c0-2 1-3.300 3.200-3"/><path d="M9 11.200h5.700"/></svg>
<div style="left:2770px;top:584px;width:80px;height:56px;border:2px solid #e5e7eb;border-radius:12px;box-sizing:border-box"></div>
<svg style="left:2796.00px;top:598.00px" width="28" height="28" viewBox="0 0 24 24" fill="none" stroke="#273141" stroke-width="2" stroke-linecap="round" stroke-linejoin="round" ><path d="M12 22v-5"/><path d="M9 8V2"/><path d="M15 8V2"/><path d="M18 8v5a4 4 0 0 1-4 4h-4a4 4 0 0 1-4-4V8Z"/></svg>
<span id="t45" class="t" style="left:2332.25px;top:611.75px;font:bold 24px/24px 'Liberation Sans','DejaVu Sans',sans-serif;color:#273141;letter-spacing:-0.850px;">Enable Year</span>
<div style="left:2794px;top:664px;width:56px;height:32px;background:#3b62e2;border-radius:16px"></div>
<div style="left:2822px;top:668px;width:24px;height:24px;background:#fff;border-radius:12px"></div>
<div style="left:2618px;top:728px;width:136px;height:56px;background:#f3f4f6;border-radius:12px"></div>
<div style="left:2622px;top:732px;width:60px;height:48px;background:#fff;border-radius:10px;box-shadow:0 8px 12px -2px rgba(0,0,0,.1),0 4px 8px -4px rgba(0,0,0,.1)"></div>
<svg style="left:2638.00px;top:742.00px" width="28" height="28" viewBox="0 0 24 24" fill="none" stroke="#3b82f6" stroke-width="2" stroke-linecap="round" stroke-linejoin="round" ><path d="M21.174 6.812a1 1 0 0 0-3.986-3.987L3.842 16.174a2 2 0 0 0-.5.830l-1.321 4.352a.5.5 0 0 0 .623.622l4.353-1.320a2 2 0 0 0 .830-.497z"/></svg>
<svg style="left:2706.00px;top:742.00px" width="28" height="28" viewBox="0 0 24 24" fill="none" stroke="#9ca3af" stroke-width="2" stroke-linecap="round" stroke-linejoin="round" ><rect width="18" height="18" x="3" y="3" rx="2" ry="2"/><path d="M9 17c2 0 2.800-1 2.800-2.800V10c0-2 1-3.300 3.200-3"/><path d="M9 11.200h5.700"/></svg>
<div style="left:2770px;top:728px;width:80px;height:56px;border:2px solid #e5e7eb;border-radius:12px;box-sizing:border-box"></div>
<svg style="left:2796.00px;top:742.00px" width="28" height="28" viewBox="0 0 24 24" fill="none" stroke="#273141" stroke-width="2" stroke-linecap="round" stroke-linejoin="round" ><path d="M12 22v-5"/><path d="M9 8V2"/><path d="M15 8V2"/><path d="M18 8v5a4 4 0 0 1-4 4h-4a4 4 0 0 1-4-4V8Z"/></svg>
<span id="t46" class="t" style="left:2332.25px;top:755.00px;font:bold 24px/24px 'Liberation Sans','DejaVu Sans',sans-serif;color:#273141;letter-spacing:-0.500px;">Default Value</span>
<div style="left:2332px;top:792px;width:518px;height:68px;background:#fff;border:2px solid #d1d5db;border-radius:10px;box-sizing:border-box;box-shadow:0 2px 3px rgba(0,0,0,.05)"></div>
<span id="t47" class="t" style="left:2353.50px;top:812.00px;font:normal 28px/28px 'Liberation Sans','DejaVu Sans',sans-serif;color:#273141;letter-spacing:1.611px;">jj/mm/aaaa</span>
<svg style="left:2802px;top:812px" width="24" height="26" viewBox="0 0 24 26"><rect x="2.250" y="4.250" width="19.500" height="19.500" rx="2.500" fill="none" stroke="#000" stroke-width="2.100"/><rect x="2" y="4" width="20" height="5" fill="#000"/><rect x="4.300" y="1" width="2.600" height="4" rx="1" fill="#000"/><rect x="17.200" y="1" width="2.600" height="4" rx="1" fill="#000"/></svg>
<div style="left:2618px;top:892px;width:136px;height:56px;background:#f3f4f6;border-radius:12px"></div>
<div style="left:2622px;top:896px;width:60px;height:48px;background:#fff;border-radius:10px;box-shadow:0 8px 12px -2px rgba(0,0,0,.1),0 4px 8px -4px rgba(0,0,0,.1)"></div>
<svg style="left:2638.00px;top:906.00px" width="28" height="28" viewBox="0 0 24 24" fill="none" stroke="#3b82f6" stroke-width="2" stroke-linecap="round" stroke-linejoin="round" ><path d="M21.174 6.812a1 1 0 0 0-3.986-3.987L3.842 16.174a2 2 0 0 0-.5.830l-1.321 4.352a.5.5 0 0 0 .623.622l4.353-1.320a2 2 0 0 0 .830-.497z"/></svg>
<svg style="left:2706.00px;top:906.00px" width="28" height="28" viewBox="0 0 24 24" fill="none" stroke="#9ca3af" stroke-width="2" stroke-linecap="round" stroke-linejoin="round" ><rect width="18" height="18" x="3" y="3" rx="2" ry="2"/><path d="M9 17c2 0 2.800-1 2.800-2.800V10c0-2 1-3.300 3.200-3"/><path d="M9 11.200h5.700"/></svg>
<div style="left:2770px;top:892px;width:80px;height:56px;border:2px solid #e5e7eb;border-radius:12px;box-sizing:border-box"></div>
<svg style="left:2796.00px;top:906.00px" width="28" height="28" viewBox="0 0 24 24" fill="none" stroke="#273141" stroke-width="2" stroke-linecap="round" stroke-linejoin="round" ><path d="M12 22v-5"/><path d="M9 8V2"/><path d="M15 8V2"/><path d="M18 8v5a4 4 0 0 1-4 4h-4a4 4 0 0 1-4-4V8Z"/></svg>
<span id="t48" class="t" style="left:2332.25px;top:919.50px;font:bold 24px/24px 'Liberation Sans','DejaVu Sans',sans-serif;color:#273141;letter-spacing:-0.550px;">Orientation</span>
<div style="left:2332px;top:956px;width:518px;height:68px;background:#fff;border:2px solid #d1d5db;border-radius:10px;box-sizing:border-box;box-shadow:0 2px 3px rgba(0,0,0,.05)"></div>
<span id="t49" class="t" style="left:2349.75px;top:977.00px;font:normal 28px/28px 'Liberation Sans','DejaVu Sans',sans-serif;color:#273141;letter-spacing:1.083px;">Horizontal</span>
<svg style="left:2795.50px;top:974.50px" width="31" height="31" viewBox="0 0 24 24" fill="none" stroke="#4b5563" stroke-width="2" stroke-linecap="round" stroke-linejoin="round" ><path d="m6 9 6 6 6-6"/></svg>
<div style="left:2618px;top:1056px;width:136px;height:56px;background:#f3f4f6;border-radius:12px"></div>
<div style="left:2622px;top:1060px;width:60px;height:48px;background:#fff;border-radius:10px;box-shadow:0 8px 12px -2px rgba(0,0,0,.1),0 4px 8px -4px rgba(0,0,0,.1)"></div>
<svg style="left:2638.00px;top:1070.00px" width="28" height="28" viewBox="0 0 24 24" fill="none" stroke="#3b82f6" stroke-width="2" stroke-linecap="round" stroke-linejoin="round" ><path d="M21.174 6.812a1 1 0 0 0-3.986-3.987L3.842 16.174a2 2 0 0 0-.5.830l-1.321 4.352a.5.5 0 0 0 .623.622l4.353-1.320a2 2 0 0 0 .830-.497z"/></svg>
<svg style="left:2706.00px;top:1070.00px" width="28" height="28" viewBox="0 0 24 24" fill="none" stroke="#9ca3af" stroke-width="2" stroke-linecap="round" stroke-linejoin="round" ><rect width="18" height="18" x="3" y="3" rx="2" ry="2"/><path d="M9 17c2 0 2.800-1 2.800-2.800V10c0-2 1-3.300 3.200-3"/><path d="M9 11.200h5.700"/></svg>
<div style="left:2770px;top:1056px;width:80px;height:56px;border:2px solid #e5e7eb;border-radius:12px;box-sizing:border-box"></div>
<svg style="left:2796.00px;top:1070.00px" width="28" height="28" viewBox="0 0 24 24" fill="none" stroke="#273141" stroke-width="2" stroke-linecap="round" stroke-linejoin="round" ><path d="M12 22v-5"/><path d="M9 8V2"/><path d="M15 8V2"/><path d="M18 8v5a4 4 0 0 1-4 4h-4a4 4 0 0 1-4-4V8Z"/></svg>
<span id="t50" class="t" style="left:2332.25px;top:1075.50px;font:bold 24px/24px 'Liberation Sans','DejaVu Sans',sans-serif;color:#273141;letter-spacing:-1.150px;">Locale</span>
<svg style="left:2408.00px;top:1075.00px" width="24" height="24" viewBox="0 0 24 24" fill="none" stroke="#3d4757" stroke-width="2" stroke-linecap="round" stroke-linejoin="round" ><circle cx="12" cy="12" r="10"/><path d="M12 16v-4"/><path d="M12 8h.01"/></svg>
<div style="left:2332px;top:1120px;width:518px;height:68px;background:#fff;border:2px solid #d1d5db;border-radius:10px;box-sizing:border-box;box-shadow:0 2px 3px rgba(0,0,0,.05)"></div>
<span id="t51" class="t" style="left:2350.75px;top:1140.75px;font:normal 28px/28px 'Liberation Sans','DejaVu Sans',sans-serif;color:#273141;letter-spacing:1.000px;">en-US</span>
<svg style="left:2795.50px;top:1138.50px" width="31" height="31" viewBox="0 0 24 24" fill="none" stroke="#4b5563" stroke-width="2" stroke-linecap="round" stroke-linejoin="round" ><path d="m6 9 6 6 6-6"/></svg>
<div style="left:2308px;top:1212px;width:566px;height:4px;background:#e5e7eb"></div>
<span id="t52" class="t" style="left:2332.25px;top:1257.50px;font:bold 24px/24px 'Liberation Sans','DejaVu Sans',sans-serif;color:#273141;letter-spacing:0.208px;">Styling</span>
<div style="left:2685px;top:1240px;width:165px;height:60px;border:2px solid #e5e7eb;border-radius:12px;box-sizing:border-box"></div>
<svg style="left:2713.50px;top:1256.50px" width="27" height="27" viewBox="0 0 24 24" fill="none" stroke="#273141" stroke-width="2" stroke-linecap="round" stroke-linejoin="round" ><path d="m15 18-6-6 6-6"/></svg>
<span id="t53" class="t" style="left:2759.00px;top:1258.00px;font:bold 24px/24px 'Liberation Sans','DejaVu Sans',sans-serif;color:#273141;letter-spacing:0.083px;">Show</span>
<span id="t54" class="t" style="left:2332.25px;top:1322.50px;font:normal 22.5px/22.5px 'Liberation Sans','DejaVu Sans',sans-serif;color:#273141;letter-spacing:0.450px;">Full height</span>
<div style="left:2457px;top:1317px;width:56px;height:32px;background:#d1d5db;border-radius:16px"></div>
<div style="left:2461px;top:1321px;width:24px;height:24px;background:#fff;border-radius:12px"></div>
<span id="t55" class="t" style="left:2528.50px;top:1320.50px;font:normal 24px/24px 'Liberation Sans','DejaVu Sans',sans-serif;color:#273141;letter-spacing:1.292px;">Desktop</span>
<div style="left:2641px;top:1317px;width:56px;height:32px;background:#d1d5db;border-radius:16px"></div>
<div style="left:2645px;top:1321px;width:24px;height:24px;background:#fff;border-radius:12px"></div>
<span id="t56" class="t" style="left:2712.25px;top:1320.50px;font:normal 24px/24px 'Liberation Sans','DejaVu Sans',sans-serif;color:#273141;letter-spacing:1.450px;">Mobile</span>
<span id="t57" class="t" style="left:2501.25px;top:1386.25px;font:normal 24px/24px 'Liberation Sans','DejaVu Sans',sans-serif;color:#3d4757;letter-spacing:0.594px;">Alignment</span>
<div style="left:2646px;top:1366px;width:204px;height:64px;background:#f3f4f6;border-radius:12px"></div>
<div style="left:2718px;top:1370px;width:60px;height:56px;background:#fff;border-radius:10px;box-shadow:0 8px 12px -2px rgba(0,0,0,.1),0 4px 8px -4px rgba(0,0,0,.1)"></div>
<svg style="left:2666.25px;top:1384.00px" width="28" height="28" viewBox="0 0 24 24" fill="none" stroke="#9ca3af" stroke-width="2" stroke-linecap="round" stroke-linejoin="round" ><rect width="6" height="16" x="4" y="6" rx="2"/><rect width="6" height="9" x="14" y="6" rx="2"/><path d="M22 2H2"/></svg>
<svg style="left:2734.00px;top:1384.00px" width="28" height="28" viewBox="0 0 24 24" fill="none" stroke="#3b82f6" stroke-width="2" stroke-linecap="round" stroke-linejoin="round" ><path d="M2 12h20"/><path d="M10 16v4a2 2 0 0 1-2 2H6a2 2 0 0 1-2-2v-4"/><path d="M10 8V4a2 2 0 0 0-2-2H6a2 2 0 0 0-2 2v4"/><path d="M20 16v1a2 2 0 0 1-2 2h-2a2 2 0 0 1-2-2v-1"/><path d="M14 8V7c0-1.100.9-2 2-2h2a2 2 0 0 1 2 2v1"/></svg>
<svg style="left:2802.00px;top:1384.00px" width="28" height="28" viewBox="0 0 24 24" fill="none" stroke="#9ca3af" stroke-width="2" stroke-linecap="round" stroke-linejoin="round" ><rect width="6" height="16" x="4" y="2" rx="2"/><rect width="6" height="9" x="14" y="9" rx="2"/><path d="M22 22H2"/></svg>
<div style="left:2308px;top:1453.5px;width:566px;height:2px;background:#e5e7eb"></div>
<span id="t58" class="t" style="left:2332.25px;top:1498.00px;font:bold 24px/24px 'Liberation Sans','DejaVu Sans',sans-serif;color:#273141;letter-spacing:0.438px;">Copy/Move</span>
<div style="left:2646px;top:1480px;width:204px;height:60px;border:2px solid #e57b7b;border-radius:12px;box-sizing:border-box"></div>
<span id="t59" class="t" style="left:2671.50px;top:1498.00px;font:bold 24px/24px 'Liberation Sans','DejaVu Sans',sans-serif;color:#c62828;letter-spacing:0.550px;">Delete</span>
<span id="t60" class="t" style="left:2762.75px;top:1498.00px;font:normal 24px/24px 'Liberation Sans','DejaVu Sans',sans-serif;color:#e08a8a;letter-spacing:0.500px;">⌘Del</span>
<div style="left:96px;top:0px;width:18px;height:1556px;background:linear-gradient(90deg,rgba(0,0,0,.09),rgba(0,0,0,.03) 40%,rgba(0,0,0,0))"></div></div></body></html>
